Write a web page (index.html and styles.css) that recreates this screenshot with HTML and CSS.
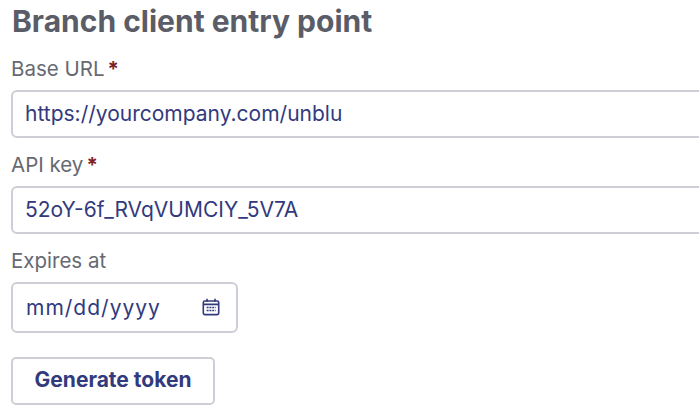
FILE: index.html
```html
<!DOCTYPE html>
<html lang="en">
  <head>
    <title>Branch client entry point</title>
    <meta charset="UTF-8">
    <link rel="stylesheet" href="styles.css">
  </head>
  <body>
    <form class="entry-form">
      <h2 class="entry-form__title">Branch client entry point</h2>
      <div class="field">
        <label class="field__label">Base URL<span class="field__req">*</span></label>
        <div class="field__input">https://yourcompany.com/unblu</div>
      </div>
      <div class="field">
        <label class="field__label">API key<span class="field__req">*</span></label>
        <div class="field__input">52oY-6f_RVqVUMCIY_5V7A</div>
      </div>
      <div class="field">
        <label class="field__label">Expires at</label>
        <div class="field__input field__input--date">
          <span class="date-text">mm/dd/yyyy</span>
          <svg class="date-icon" width="18" height="18" viewBox="0 0 18 18" fill="none" stroke="#323a7d" stroke-width="1.6">
            <rect x="1.3" y="3" width="15.4" height="13.6" rx="1.5"/>
            <path d="M1.3 6.4h15.4M5 .8v3M13 .8v3"/>
            <path stroke-width="1.5" stroke-dasharray="2 .8" d="M4.6 9.4h9M4.6 12.6h9"/>
          </svg>
        </div>
      </div>
      <button class="btn" type="button">Generate token</button>
    </form>
  </body>
</html>
```

FILE: styles.css
```css
* {
  box-sizing: border-box;
}
html, body {
  margin: 0;
  padding: 0;
  overflow: hidden;
  background: #fff;
  font-family: 'Inter', 'Liberation Sans', sans-serif;
}
.entry-form {
  width: 720px;
  padding: 4px 0 0 11px;
}
.entry-form__title {
  margin: 0 0 19px 1px;
  font-size: 30px;
  line-height: 34px;
  font-weight: 700;
  color: #5a5d68;
}
.field {
  margin-bottom: 15px;
}
.field__label {
  display: block;
  height: 33px;
  font-size: 20.5px;
  line-height: 23px;
  color: #666971;
}
.field__req {
  margin-left: 3px;
  color: #7c1f28;
  font-weight: 700;
}
.field__input {
  display: flex;
  align-items: center;
  height: 48px;
  padding: 0 12px 2px;
  font-size: 21px;
  color: #323a7d;
  background: #fff;
  border: 2px solid #cdced6;
  border-radius: 6px;
}
.field__input--date {
  justify-content: space-between;
  width: 227px;
  height: 51px;
  padding: 0 16px 1px 13px;
  margin-bottom: 24px;
}
.date-text {
  letter-spacing: 1px;
}
.date-icon {
  flex: none;
}
.btn {
  display: block;
  width: 204px;
  height: 48px;
  padding: 0 0 3px;
  font-family: inherit;
  font-size: 21px;
  font-weight: 700;
  color: #323a7d;
  background: #fff;
  border: 2px solid #cdced6;
  border-radius: 5px;
}
```
